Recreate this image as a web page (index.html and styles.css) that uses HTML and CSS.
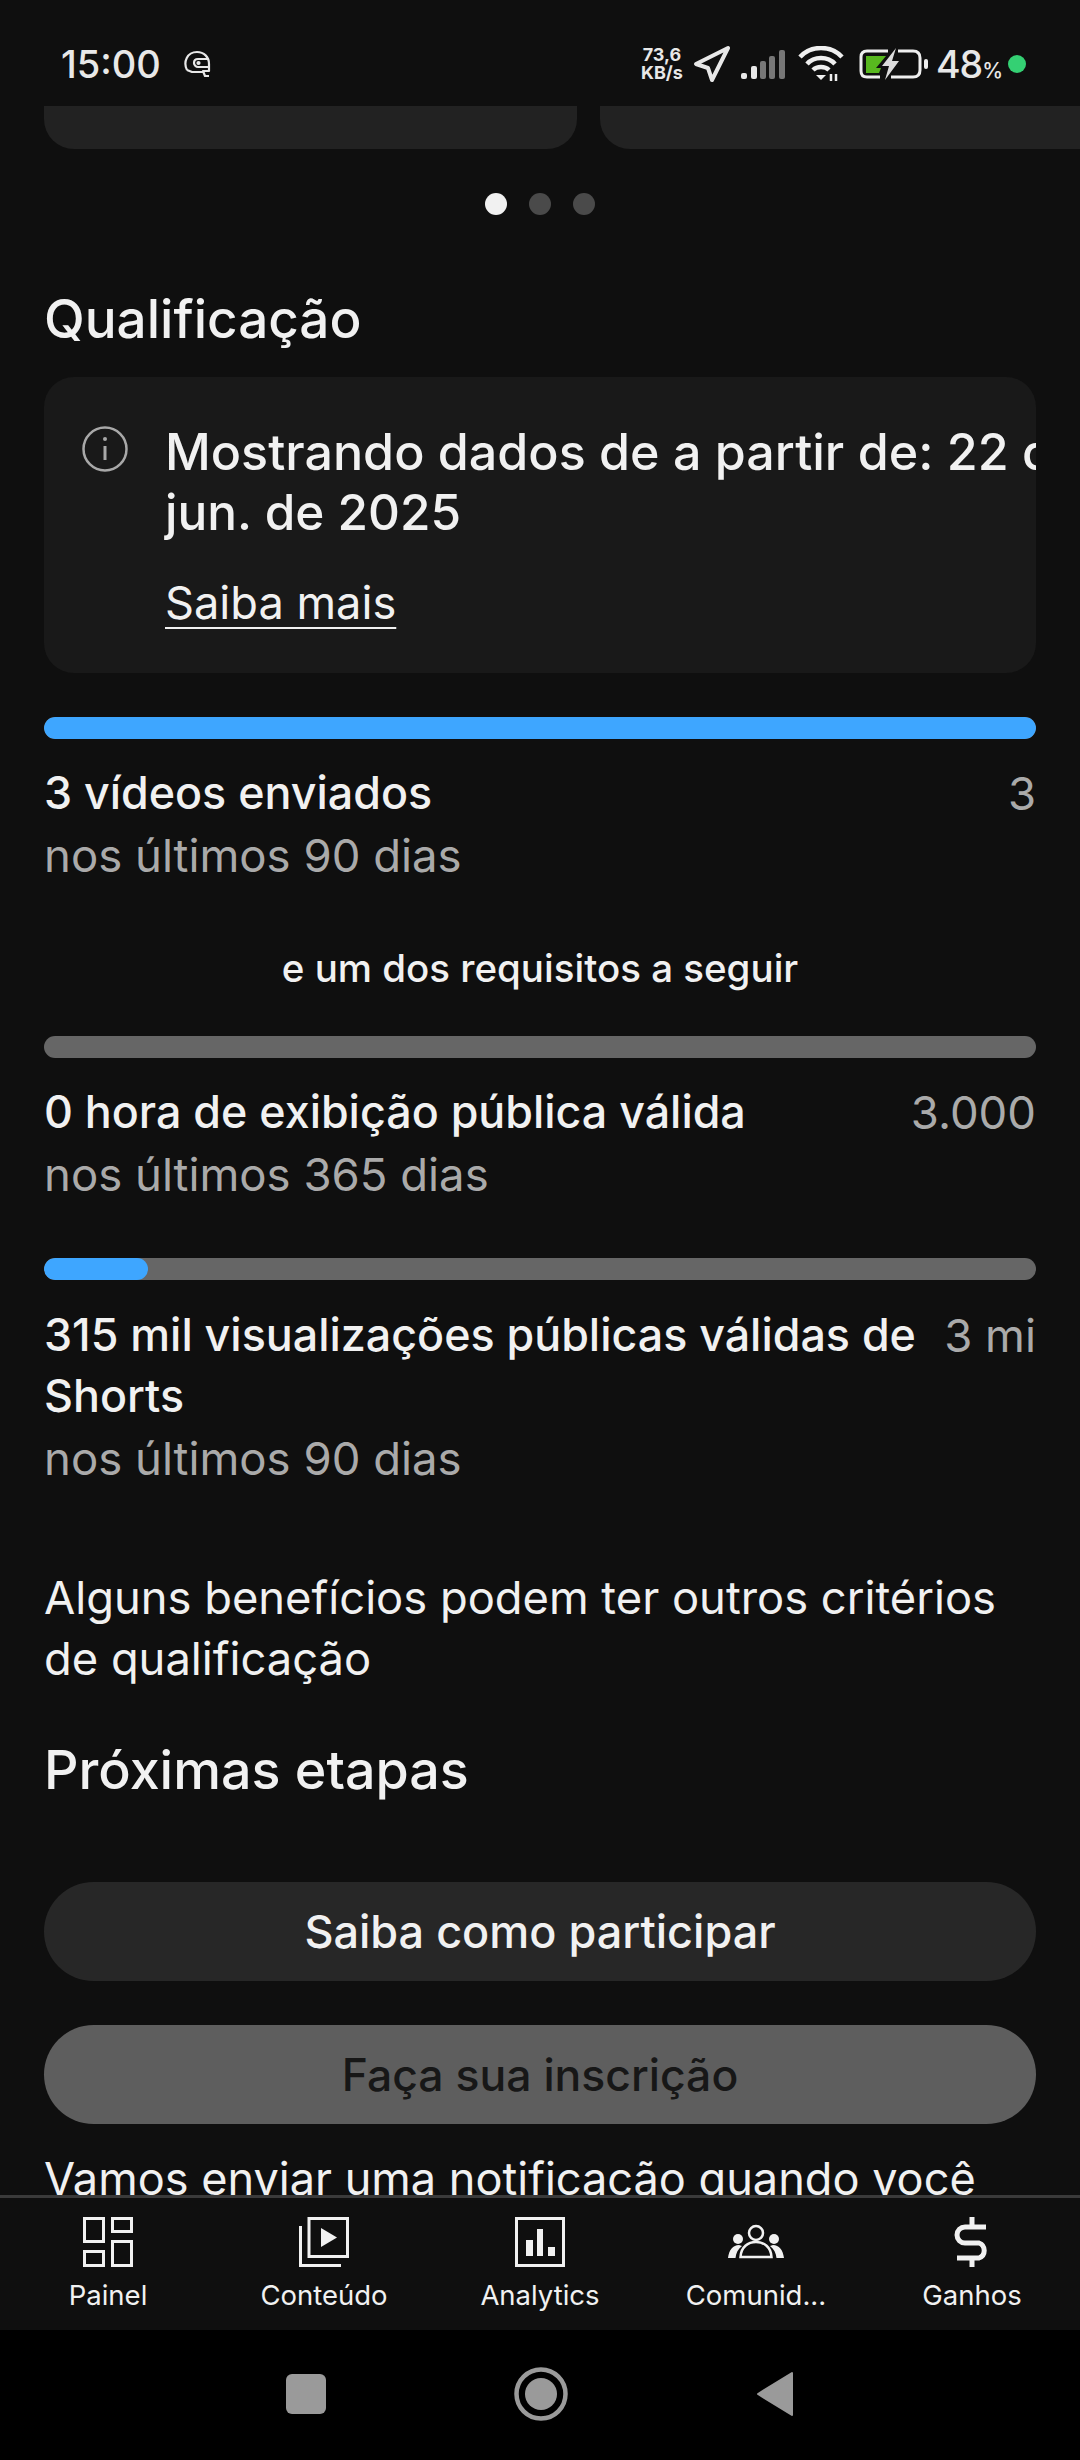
FILE: index.html
```html
<!DOCTYPE html>
<html lang="pt-BR">
<head>
  <meta charset="UTF-8" />
  <title>Qualificação</title>
  <link rel="stylesheet" href="styles.css">
</head>
<body>
  <div class="screen">
    <!-- Status bar -->
    <div class="status">
      <span class="clock">15:00</span>
      <svg class="helmet" width="28" height="28" viewBox="0 0 28 28" fill="none" stroke="#e8e8e8" stroke-width="2.200" stroke-linejoin="round">
        <path d="M4 20 C0 12 4 2 14 2 C21 2 26 7 26 14 V21 H20 L22 26 H26 M4 20 L9 22 H20"/>
        <path d="M26 9 H15 C12 9 11 11 11 13 C11 15 13 17 15 17 H26"/>
        <circle cx="15.500" cy="13" r="1"/>
      </svg>
      <div class="status-right">
        <div class="speed"><span>73,6</span><span>KB/s</span></div>
        <svg class="arrow" width="38" height="38" viewBox="0 0 38 38" fill="none" stroke="#e8e8e8" stroke-width="4" stroke-linejoin="round">
          <path d="M3 19 L35 3 L19 35 L15 23 Z"/>
        </svg>
        <svg class="signal" width="44" height="30" viewBox="0 0 44 30">
          <rect x="0" y="24" width="6" height="6" rx="2" fill="#e8e8e8"/>
          <rect x="10" y="17" width="6" height="13" rx="2" fill="#e8e8e8"/>
          <rect x="19" y="12" width="6" height="18" rx="2" fill="#777"/>
          <rect x="28" y="7" width="6" height="23" rx="2" fill="#777"/>
          <rect x="38" y="1" width="6" height="29" rx="2" fill="#777"/>
        </svg>
        <svg class="wifi" width="46" height="36" viewBox="0 0 46 36" fill="none" stroke="#efefef" stroke-width="4.500">
          <path d="M2 11 C13 -1 33 -1 44 11"/>
          <path d="M9 18 C16 10 30 10 37 18"/>
          <path d="M15 24 C19 20 27 20 31 24"/>
          <path d="M18 29 L23 34 L28 29 Z" fill="#efefef" stroke="none"/>
          <path d="M33 35 V28 M38 35 V28" stroke-width="2.500"/>
        </svg>
        <svg class="battery" width="70" height="32" viewBox="0 0 70 32">
          <path d="M29 3 H8 Q2 3 2 9 V23 Q2 29 8 29 H21 M39 3 H54 Q61 3 61 10 V22 Q61 29 54 29 H32" fill="none" stroke="#efefef" stroke-width="3"/>
          <path d="M7 8 H27 L17 20 H22 L20 25 H7 Z" fill="#58b81f"/>
          <path d="M37 0 L23 18 H30 L26 32 L40 13 H33 Z" fill="#dcdcdc"/>
          <rect x="65" y="11" width="4" height="10" rx="2" fill="#efefef"/>
        </svg>
        <span class="battery-num">48<small>%</small></span>
        <span class="cam-dot"></span>
      </div>
    </div>

    <!-- Scrolling content -->
    <div class="content">
      <div class="cards">
        <div class="card-end"></div>
        <div class="card-end"></div>
      </div>

      <div class="dots">
        <span class="dot on"></span>
        <span class="dot"></span>
        <span class="dot"></span>
      </div>

      <h2 class="title">Qualificação</h2>

      <div class="notice">
        <svg class="info" width="46" height="46" viewBox="0 0 46 46" fill="none" stroke="#a8a8a8" stroke-width="2.500">
          <circle cx="23" cy="23" r="21.500"/>
          <path d="M23 20 V34" stroke-width="3"/>
          <circle cx="23" cy="13" r="2" fill="#a8a8a8" stroke="none"/>
        </svg>
        <div class="notice-body">
          <p class="notice-text"><span class="nowrap">Mostrando dados de a partir de: 22 de</span><br>jun. de 2025</p>
          <a class="more">Saiba mais</a>
        </div>
      </div>

      <div class="bar first"><div class="fill full"></div></div>
      <div class="req">
        <div class="req-main">
          <div>3 vídeos enviados</div>
          <div class="sub">nos últimos 90 dias</div>
        </div>
        <div class="req-goal">3</div>
      </div>

      <div class="either">e um dos requisitos a seguir</div>

      <div class="bar second"><div class="fill"></div></div>
      <div class="req">
        <div class="req-main">
          <div>0 hora de exibição pública válida</div>
          <div class="sub">nos últimos 365 dias</div>
        </div>
        <div class="req-goal">3.000</div>
      </div>

      <div class="bar third"><div class="fill" style="width: 10.5%"></div></div>
      <div class="req tall">
        <div class="req-main">
          <div>315 mil visualizações públicas válidas de Shorts</div>
          <div class="sub">nos últimos 90 dias</div>
        </div>
        <div class="req-goal">3 mi</div>
      </div>

      <p class="note">Alguns benefícios podem ter outros critérios de qualificação</p>

      <h2 class="title next">Próximas etapas</h2>

      <button class="btn how">Saiba como participar</button>
      <button class="btn apply">Faça sua inscrição</button>

      <p class="after">Vamos enviar uma notificação quando você</p>
    </div>

    <!-- Bottom tabs -->
    <div class="tabs">
      <div class="tab">
        <svg width="50" height="50" viewBox="0 0 50 50" fill="none" stroke="#f1f1f1" stroke-width="3">
          <rect x="1.500" y="1.500" width="19" height="23"/>
          <rect x="29.500" y="1.500" width="19" height="13"/>
          <rect x="1.500" y="34.500" width="19" height="14"/>
          <rect x="29.500" y="24.500" width="19" height="24"/>
        </svg>
        <span>Painel</span>
      </div>
      <div class="tab">
        <svg width="50" height="50" viewBox="0 0 50 50" fill="none" stroke="#f1f1f1" stroke-width="3">
          <rect x="10" y="1.500" width="38.500" height="38"/>
          <path d="M1.500 9 V48.500 H42"/>
          <path d="M22 11 L38 20.500 L22 30 Z" fill="#f1f1f1" stroke="none"/>
        </svg>
        <span>Conteúdo</span>
      </div>
      <div class="tab">
        <svg width="50" height="50" viewBox="0 0 50 50" fill="none" stroke="#f1f1f1" stroke-width="3">
          <rect x="1.500" y="1.500" width="47" height="47"/>
          <g fill="#f1f1f1" stroke="none">
            <rect x="11" y="23" width="7" height="16"/>
            <rect x="22" y="12" width="6" height="27"/>
            <rect x="33" y="30" width="7" height="9"/>
          </g>
        </svg>
        <span>Analytics</span>
      </div>
      <div class="tab">
        <svg width="56" height="50" viewBox="0 0 56 50" fill="none" stroke="#f1f1f1" stroke-width="2.500">
          <circle cx="28" cy="16" r="7"/>
          <path d="M12.500 40 C13 30 20 25 28 25 C36 25 43 30 43.500 40 Z"/>
          <g fill="#f1f1f1" stroke="none">
            <circle cx="10" cy="22" r="5"/>
            <circle cx="46" cy="22" r="5"/>
            <path d="M0 41 C1 33 5 28 11 28 L14 29 C10 32 8 36 7.500 41 Z"/>
            <path d="M56 41 C55 33 51 28 45 28 L42 29 C46 32 48 36 48.500 41 Z"/>
          </g>
        </svg>
        <span>Comunid...</span>
      </div>
      <div class="tab">
        <svg width="50" height="50" viewBox="0 0 50 50" fill="none" stroke="#f1f1f1" stroke-width="5">
          <path d="M39 10 H18 A8 8 0 0 0 18 26 H32 A8 8 0 0 1 32 41 H10"/>
          <path d="M25 0 V10 M25 41 V50"/>
        </svg>
        <span>Ganhos</span>
      </div>
    </div>

    <!-- Android nav -->
    <div class="nav">
      <span class="nav-square"></span>
      <svg width="54" height="54" viewBox="0 0 54 54">
        <circle cx="27" cy="27" r="24.500" fill="none" stroke="#9a9a9a" stroke-width="4.500"/>
        <circle cx="27" cy="27" r="16" fill="#9a9a9a"/>
      </svg>
      <svg width="38" height="46" viewBox="0 0 38 46">
        <path d="M36 2 V44 L2 23 Z" fill="#9a9a9a" stroke="#9a9a9a" stroke-width="2" stroke-linejoin="round"/>
      </svg>
    </div>
  </div>
</body>
</html>
```

FILE: styles.css
```css
body {
  margin: 0;
  background-color: #0f0f0f;
  color: #f1f1f1;
  font-family: Inter, 'Noto Sans', sans-serif;
}

.screen {
  width: 1080px;
  height: 2460px;
  display: flex;
  flex-direction: column;
  overflow: hidden;
}

.status {
  height: 106px;
  flex: none;
  display: flex;
  align-items: center;
  padding: 22px 54px 0 61px;
  box-sizing: border-box;
}

.clock {
  font-size: 38px;
  font-weight: 500;
  color: #e8e8e8;
}

.helmet {
  margin-left: 22px;
}

.status-right {
  margin-left: auto;
  display: flex;
  align-items: center;
  color: #e8e8e8;
}

.speed {
  display: flex;
  flex-direction: column;
  align-items: center;
  font-size: 18px;
  font-weight: 700;
  line-height: 18px;
  width: 44px;
}

.arrow {
  margin-left: 9px;
}

.signal {
  margin-left: 10px;
}

.wifi {
  margin-left: 13px;
}

.battery {
  margin-left: 15px;
}

.battery-num {
  margin-left: 7px;
  font-size: 37.5px;
  font-weight: 500;
  letter-spacing: -1px;
}

.battery-num small {
  font-size: 21px;
}

.cam-dot {
  width: 18px;
  height: 18px;
  margin-left: 6px;
  border-radius: 50%;
  background-color: #34d073;
}

.content {
  flex: 1;
  min-height: 0;
  overflow: hidden;
  padding: 0 44px;
  font-size: 44.8px;
  line-height: 61px;
}

.cards {
  display: flex;
  gap: 23px;
  width: 1100px;
}

.card-end {
  width: 533px;
  flex: none;
  height: 43px;
  background-color: #222222;
  border-radius: 0 0 30px 30px;
}

.dots {
  display: flex;
  justify-content: center;
  gap: 22px;
  margin-top: 44px;
}

.dot {
  width: 22px;
  height: 22px;
  border-radius: 50%;
  background-color: #4a4a4a;
}

.dot.on {
  background-color: #f1f1f1;
}

.title {
  margin: 73px 0 0;
  font-size: 53px;
  font-weight: 500;
  line-height: 62px;
}

.title.next {
  margin-top: 50px;
  font-size: 53.8px;
}

.notice {
  margin-top: 27px;
  height: 296px;
  box-sizing: border-box;
  padding: 45px 0 0 38px;
  display: flex;
  gap: 37px;
  background-color: #191919;
  border-radius: 30px;
  overflow: hidden;
}

.info {
  flex: none;
  margin-top: 4px;
}

.notice-text {
  margin: 0;
  font-weight: 500;
  font-size: 49.5px;
  line-height: 60px;
}

.nowrap {
  white-space: nowrap;
  font-size: 50.2px;
}

.more {
  display: inline-block;
  margin-top: 31px;
  font-size: 45.2px;
  line-height: 60px;
  text-decoration: underline;
  text-underline-offset: 8px;
  text-decoration-thickness: 2px;
}

.bar {
  height: 22px;
  border-radius: 11px;
  background-color: #666666;
  overflow: hidden;
}

.bar.first {
  margin-top: 44px;
}

.bar.second {
  margin-top: 38px;
}

.bar.third {
  margin-top: 53px;
}

.fill {
  height: 100%;
  width: 0;
  border-radius: 11px;
  background-color: #3ea6ff;
}

.fill.full {
  width: 100%;
}

.req {
  display: flex;
  justify-content: space-between;
  gap: 28px;
  margin-top: 24px;
  font-weight: 500;
}

.req.tall {
  margin-top: 25px;
}

.sub,
.req-goal {
  color: #aaaaaa;
  font-weight: 400;
  font-size: 45.5px;
}

.sub {
  margin-top: 1px;
}

.req-goal {
  white-space: nowrap;
}

.either {
  margin-top: 52px;
  text-align: center;
  font-size: 38.5px;
  font-weight: 500;
  line-height: 60px;
}

.note {
  margin: 78px 0 0;
  font-size: 45.3px;
}

.btn {
  display: block;
  width: 100%;
  height: 99px;
  border: none;
  border-radius: 50px;
  font-family: inherit;
  font-size: 44.5px;
  font-weight: 500;
}

.btn.how {
  margin-top: 81px;
  font-size: 45px;
  background-color: #272727;
  color: #f1f1f1;
}

.btn.apply {
  margin-top: 44px;
  background-color: #5e5e5e;
  color: #171717;
}

.after {
  margin: 24px 0 0;
  font-size: 45.1px;
  white-space: nowrap;
}

.tabs {
  flex: none;
  height: 135px;
  box-sizing: border-box;
  border-top: 3px solid #3a3a3a;
  display: grid;
  grid-template-columns: repeat(5, 1fr);
  padding: 19px 0 0;
}

.tab {
  display: flex;
  flex-direction: column;
  align-items: center;
  font-size: 27.5px;
  line-height: 36px;
  gap: 10px;
}

.nav {
  flex: none;
  height: 130px;
  background-color: #000;
  display: flex;
  align-items: center;
  justify-content: center;
  gap: 188px;
  padding-bottom: 2px;
  box-sizing: border-box;
}

.nav-square {
  width: 40px;
  height: 40px;
  border-radius: 6px;
  background-color: #9a9a9a;
}
```
